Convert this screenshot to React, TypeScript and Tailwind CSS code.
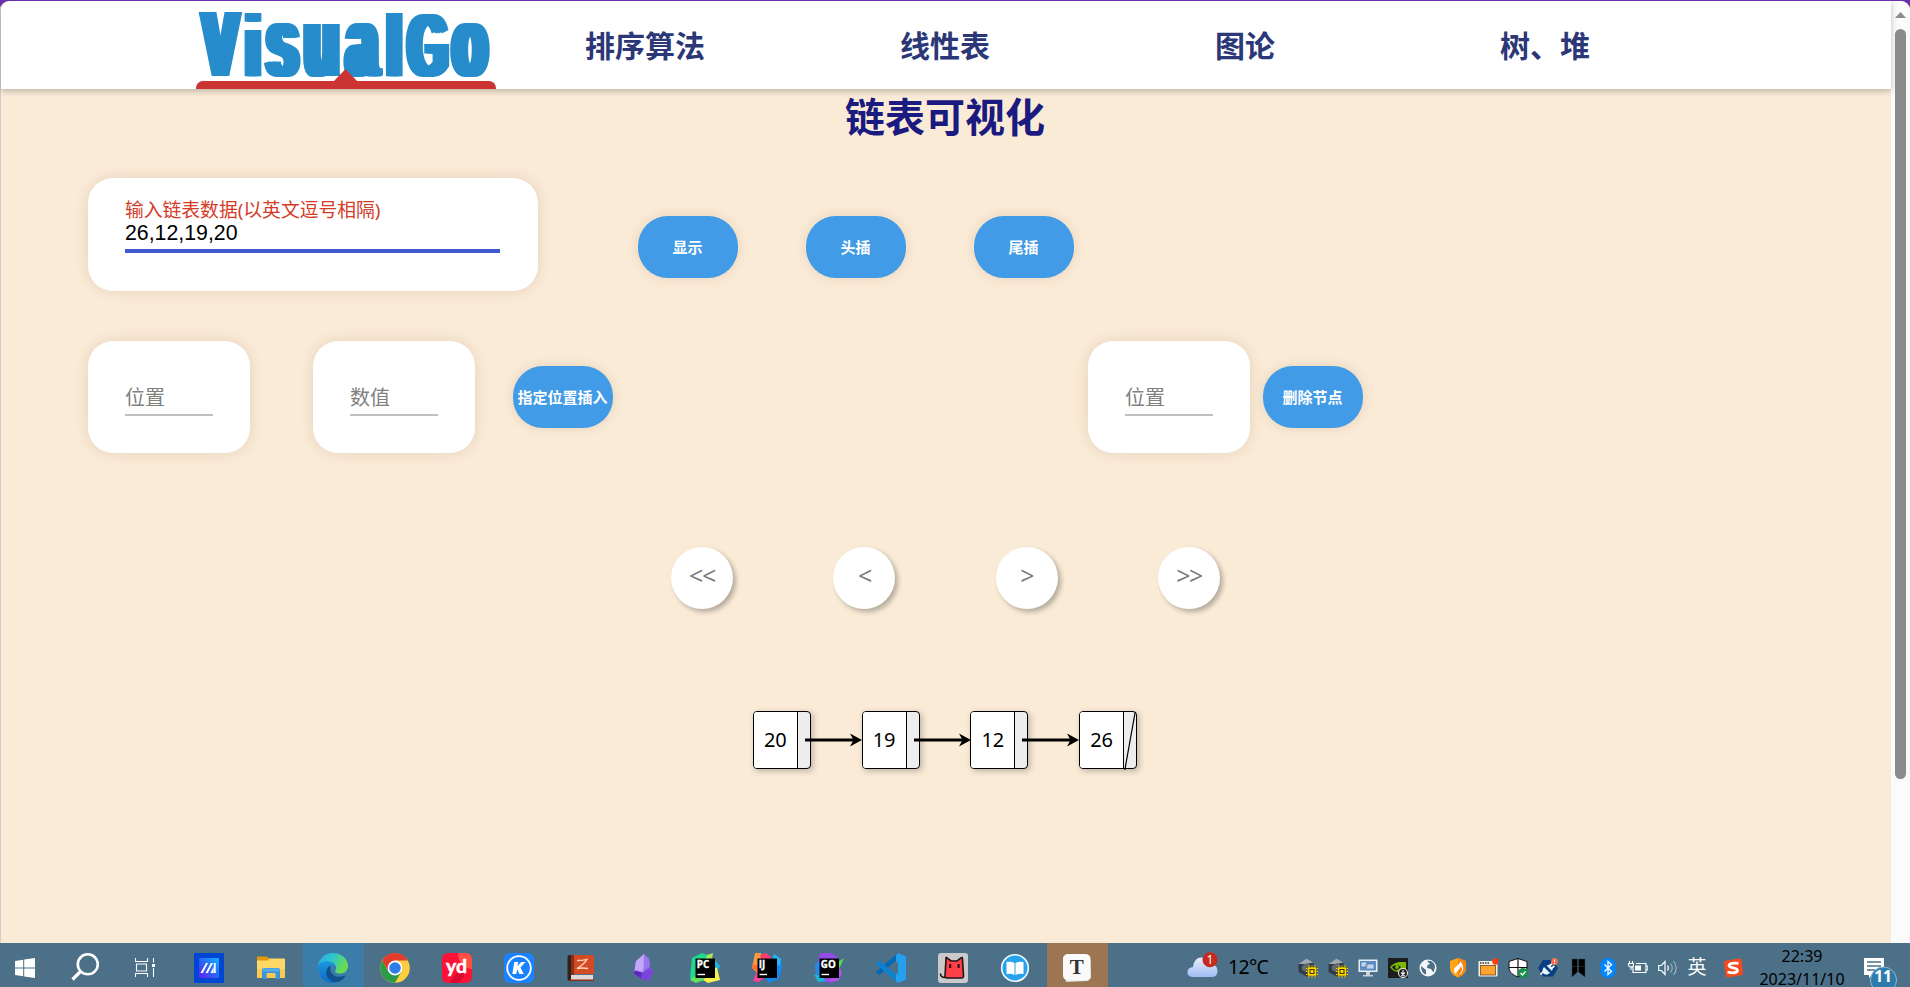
import type { ReactNode } from "react";

const CARD = "bg-white rounded-[25px] shadow-[0_0_14px_rgba(120,80,40,0.16)]";
const CJK = "font-['Noto_Sans','Noto_Sans_CJK_SC',sans-serif]";

function Logo() {
  return (
    <svg width="300" height="88" viewBox="0 0 300 88" className="block overflow-visible">
      <defs>
        <filter id="heavyX" filterUnits="userSpaceOnUse" x="0" y="0" width="300" height="88" colorInterpolationFilters="sRGB">
          <feOffset in="SourceGraphic" dx="-4.800" result="a" />
          <feOffset in="SourceGraphic" dx="-2.400" result="b" />
          <feOffset in="SourceGraphic" dx="2.400" result="c" />
          <feOffset in="SourceGraphic" dx="4.800" result="d" />
          <feMerge>
            <feMergeNode in="a" />
            <feMergeNode in="b" />
            <feMergeNode in="SourceGraphic" />
            <feMergeNode in="c" />
            <feMergeNode in="d" />
          </feMerge>
        </filter>
      </defs>
      <g filter="url(#heavyX)">
        <g transform="scale(0.56 1)" fill="#268ccb">
          <text y="75" fontFamily="Liberation Sans, sans-serif" fontWeight="700" fontSize="87">
            <tspan x="13" fontSize="92">V</tspan>
            <tspan x="89.700" fontSize="87">i</tspan>
            <tspan x="126.700" fontSize="99">s</tspan>
            <tspan x="194.300" fontSize="99">u</tspan>
            <tspan x="269.200" fontSize="99">a</tspan>
            <tspan x="342" fontSize="87">l</tspan>
            <tspan x="379.500" fontSize="89">G</tspan>
            <tspan x="459" fontSize="99">o</tspan>
          </text>
        </g>
      </g>
      <path d="M0 88v-1a7 7 0 0 1 7-7h131l11.500-12L161 80h132a7 7 0 0 1 7 7v1z" fill="#cc3333" />
    </svg>
  );
}

function Header() {
  return (
    <header className="relative z-10 flex h-[88px] shrink-0 rounded-tl-[9px] bg-white pl-[195px] shadow-[0_2px_6px_rgba(0,0,0,0.25)]">
      <Logo />
      <nav className="-ml-px flex">
        {["排序算法", "线性表", "图论", "树、堆"].map((t) => (
          <a key={t} className="flex w-[300px] items-center justify-center pt-px text-[30px] leading-none font-bold text-[#2b3777]">
            {t}
          </a>
        ))}
      </nav>
    </header>
  );
}

function PillButton({ children, className = "" }: { children: ReactNode; className?: string }) {
  return (
    <button className={`h-[62px] w-[100px] shrink-0 rounded-[30px] bg-[#429be6] pr-[1px] text-[15px] font-bold whitespace-nowrap text-white shadow-[0_0_12px_rgba(120,80,40,0.16)] ${className}`}>
      {children}
    </button>
  );
}

function SmallField({ label, className = "" }: { label: string; className?: string }) {
  return (
    <div className={`h-[112px] w-[162px] shrink-0 px-[37px] pt-[38px] ${CARD} ${className}`}>
      <div className="h-[37px] border-b-2 border-[#c0c0c0] text-[20px] leading-[37px] text-[#808080]">{label}</div>
    </div>
  );
}

function StepButton({ label }: { label: string }) {
  return (
    <button className="h-[62px] w-[62px] rounded-full bg-white pb-[6px] font-['Open_Sans',sans-serif] text-[25px] leading-none tracking-[-1.500px] text-[#777] shadow-[3px_3px_5px_rgba(0,0,0,0.28)]">
      {label}
    </button>
  );
}

function Arrow() {
  return (
    <svg width="57" height="14" viewBox="0 0 57 14" className="relative z-10 -mr-[0.250px] -ml-[6px] shrink-0">
      <path d="M0 7h50" stroke="#000" strokeWidth="3" />
      <path d="M57 7L45 .5 48.500 7 45 13.500z" fill="#000" />
    </svg>
  );
}

function ListNode({ value, last }: { value: number; last: boolean }) {
  return (
    <div className="flex h-[58px] w-[58px] shrink-0 rounded-[4px] border border-black bg-[#ededed] shadow-[2px_2px_6px_rgba(0,0,0,0.25)]">
      <div className="flex w-[44px] shrink-0 items-center justify-center rounded-l-[3px] border-r border-black bg-white font-['Noto_Sans',sans-serif] text-[20px] leading-none text-black">
        {value}
      </div>
      {last && (
        <svg width="12" height="58" viewBox="0 0 12 58" className="shrink-0">
          <path d="M.8 58L11.200 0" stroke="#000" strokeWidth="1.200" />
        </svg>
      )}
    </div>
  );
}

function App30({ children }: { children: ReactNode }) {
  return (
    <svg width="30" height="30" viewBox="0 0 30 30">
      {children}
    </svg>
  );
}

function JetBrains({ text, children }: { text: string; children: ReactNode }) {
  return (
    <App30>
      {children}
      <rect x="5.500" y="5.500" width="19.500" height="19.500" fill="#000" />
      <text x="6.800" y="14.800" fontSize="9.800" fontWeight="700" fontFamily="Open Sans, sans-serif" fill="#fff" stroke="#fff" strokeWidth=".3">
        {text}
      </text>
      <path d="M7.500 21.500h7.500" stroke="#fff" strokeWidth="1.400" />
    </App30>
  );
}

const apps: { name: string; bg: string; icon: ReactNode }[] = [
  {
    name: "ma",
    bg: "",
    icon: (
      <App30>
        <defs>
          <linearGradient id="ma" x1="0" y1="1" x2="1" y2="0">
            <stop offset="0" stopColor="#6a1df2" />
            <stop offset=".5" stopColor="#2a66f5" />
            <stop offset="1" stopColor="#12b4ff" />
          </linearGradient>
        </defs>
        <rect width="30" height="30" fill="#0046d2" />
        <rect x="5" y="5" width="20" height="20" fill="url(#ma)" />
        <path d="M6.500 20L12 10h2L8.800 20zM11.500 20L17 10h2l-5.200 10zM16.500 20l3-6v6zM19.800 10h1.900v10h-1.900z" fill="#fff" />
      </App30>
    ),
  },
  {
    name: "explorer",
    bg: "",
    icon: (
      <App30>
        <path d="M1 3.500h10l3 2.500h1v3H1z" fill="#e09a0c" />
        <path d="M1 7.500h11l1.500-2H28a1 1 0 0 1 1 1V25H1z" fill="#ffd766" />
        <path d="M1 16h28v9H1z" fill="#f7cb50" />
        <path d="M6 26v-9a2 2 0 0 1 2-2h14a2 2 0 0 1 2 2v9h-4.500v-6h-9v6z" fill="#3a93dc" />
        <path d="M6.500 15.500h17v3h-17z" fill="#57aee8" />
      </App30>
    ),
  },
  {
    name: "edge",
    bg: "border-l border-transparent bg-clip-padding pr-px bg-[#3b7ca8]",
    icon: (
      <App30>
        <defs>
          <linearGradient id="e1" x1="0" y1="0" x2="1" y2=".4">
            <stop offset="0" stopColor="#28a9e6" />
            <stop offset=".5" stopColor="#2fc6cf" />
            <stop offset="1" stopColor="#68dd4c" />
          </linearGradient>
          <linearGradient id="e2" x1="0" y1="0" x2="0" y2="1">
            <stop offset="0" stopColor="#1d97dd" />
            <stop offset="1" stopColor="#0c6cc6" />
          </linearGradient>
        </defs>
        <path d="M0 13.500C1 5 7.500 0 15 0c9 0 15 6.500 15 13 0 5-4 7.500-8 7.500-3.500 0-5.500-1.500-4.700-2.800C19.500 14 17 9 9.500 9 4.500 9 1 11.500 0 13.500z" fill="url(#e1)" />
        <path d="M0 15C0 11 4 8 9.500 8.300c6 .2 9 4.200 8.500 7.200-.4-2.200-3-3.500-5.500-3C7.500 14 8 24 18 28.500c.8.500-.5 1.500-3 1.500C6.500 30 0 23.500 0 15z" fill="url(#e2)" />
        <path d="M12.500 12.500C9 14 6 20 10 25c4 5 12 6 17-1.500.6-1-.3-1.200-1-.8C19 26 12.500 21.500 12.300 16.500c0-1.800.2-3 .2-4z" fill="#11508f" />
      </App30>
    ),
  },
  {
    name: "chrome",
    bg: "",
    icon: (
      <App30>
        <circle cx="15" cy="15" r="14.800" fill="#ffcd40" />
        <path d="M15 7.500h12.900A14.800 14.800 0 0 0 2.100 7.700L8.600 18.500 15 15z" fill="#e33b2e" />
        <path d="M2.100 7.700A14.800 14.800 0 0 0 15 29.800l6.500-11.200L15 15l-6.500 3.800z" fill="#2a9b48" />
        <circle cx="15" cy="15" r="7.400" fill="#fff" />
        <circle cx="15" cy="15" r="5.800" fill="#2f7de9" />
      </App30>
    ),
  },
  {
    name: "youdao",
    bg: "",
    icon: (
      <App30>
        <rect width="30" height="30" rx="6" fill="#fc1236" />
        <path d="M16 0h8a6 6 0 0 1 6 6v10c-9-1-14-7-14-16z" fill="#ff4f45" />
        <path d="M8 30c3-7 8-11 13-14l1 8-6 6z" fill="#d90b30" />
        <text x="4" y="19.500" fontSize="18" fontWeight="700" fontFamily="Lato, sans-serif" fill="#fff" stroke="#fff" strokeWidth=".5" textLength="21" lengthAdjust="spacingAndGlyphs">
          yd
        </text>
      </App30>
    ),
  },
  {
    name: "kugou",
    bg: "",
    icon: (
      <App30>
        <rect width="30" height="30" rx="6" fill="#1b82ff" />
        <circle cx="15" cy="15" r="11.800" fill="none" stroke="#fff" strokeWidth="1.800" />
        <path d="M10.300 9h3.900l-.8 4.300L17.200 9h4.300l-5 5.500 3.200 6.500h-4.200l-2.300-4.800-.9 4.800H8.300z" fill="#fff" />
      </App30>
    ),
  },
  {
    name: "zotero",
    bg: "",
    icon: (
      <App30>
        <path d="M1.500 4Q1.500 2 4 2H8v26H4q-2.500 0-2.500-2z" fill="#33201b" />
        <path d="M5 2h21.500a1.500 1.500 0 0 1 1.500 1.500V21H5z" fill="#d24b22" />
        <path d="M5 2h3v20H5z" fill="#8d2f18" />
        <path d="M5 22h22v5H5z" fill="#ded9d6" />
        <path d="M3 26.500h25v1.500H3z" fill="#8b2a16" />
        <path d="M11 7.500q5 0 10-1.200-3 5-10 9.200 6-1 11 0" fill="none" stroke="#ffd2bd" strokeWidth="1.300" />
      </App30>
    ),
  },
  {
    name: "obsidian",
    bg: "",
    icon: (
      <App30>
        <path d="M16 1l5 4.500 1 8 3.500 5.500-5 9-8-2.500L5 20.500 8 8.500z" fill="#8458dc" />
        <path d="M16 1L8 8l-1.500 9.500 8.500 1.500 2-8z" fill="#c0a7f8" />
        <path d="M16 1l5 4.500 1 8-6.500 5z" fill="#9a76ec" />
        <path d="M5 20l3-2.500 6 2.500-1 5.500z" fill="#5b2bb8" />
        <path d="M14 20l8-4.500 3.500 3.500-5 9-7.500-2.500z" fill="#7a46da" />
      </App30>
    ),
  },
  {
    name: "pycharm",
    bg: "",
    icon: (
      <JetBrains text="PC">
        <path d="M2 5L12 0l8 3 2 12-9 13-9 1-4-4z" fill="#22d88f" />
        <path d="M17 2l6-2-1 6-8 6z" fill="#a4e85c" />
        <path d="M25 7l5 6-4 7z" fill="#19b9e9" />
        <path d="M13 27l11-13 3 1 3 12-12 3z" fill="#f9f14b" />
        <path d="M0 27l6-5 9 4-9 4z" fill="#68e05f" />
      </JetBrains>
    ),
  },
  {
    name: "idea",
    bg: "",
    icon: (
      <JetBrains text="IJ">
        <path d="M3 0h6l4 8-8 12-5-5z" fill="#fc9a3d" />
        <path d="M8 2l6-2 6 5-9 8z" fill="#fe3c70" />
        <path d="M18 6l5-5 6 5 1 8-3 12-10 4-5-7z" fill="#1688f2" />
        <path d="M22 1l7 5-1 7-8-4z" fill="#2bb5ef" />
        <path d="M1 28l5-12 7 8-6 5z" fill="#fb3f9b" />
        <path d="M0 11l7 2-1 6-5-3z" fill="#ff6a36" />
      </JetBrains>
    ),
  },
  {
    name: "goland",
    bg: "",
    icon: (
      <JetBrains text="GO">
        <path d="M6 0h12l6 5v20l-6 5-12-2-5-9z" fill="#934be8" />
        <path d="M1 11l6-3v16l-5-3z" fill="#268be8" />
        <path d="M0 21l8 2 4 5-8 1z" fill="#18b8d6" />
        <path d="M24 9l6-4-5 11z" fill="#4be34f" />
        <path d="M14 28l12-13 2 6-4 7z" fill="#b650e6" />
      </JetBrains>
    ),
  },
  {
    name: "vscode",
    bg: "",
    icon: (
      <App30>
        <path d="M22 0l-1.500 7L3.500 22 0 19.500v-1z" fill="#0069b5" />
        <path d="M3.500 7.500L0 10v1.200L22 30l-1-8z" fill="#1080cc" />
        <path d="M22 0l8 3.500v23L22 30l-2-2V2z" fill="#24a0ee" />
        <path d="M22 8.200V21.500L13 15z" fill="#4b7087" />
      </App30>
    ),
  },
  {
    name: "cat",
    bg: "",
    icon: (
      <App30>
        <rect width="30" height="30" rx="3" fill="#cbc9c9" />
        <path d="M8 6q-.5-2.500 1-1l4 3h6l4-3q1.500-1.500 1.500 1l1 17q0 2-2 2H9q-2 0-2-2z" fill="#ff4048" stroke="#1f1517" strokeWidth="1.600" />
        <path d="M7 24.500q-4.500 0-4.500-4" fill="none" stroke="#1f1517" strokeWidth="1.600" />
        <path d="M12.200 11v4M20.600 11v4" stroke="#1f1517" strokeWidth="2" />
      </App30>
    ),
  },
  {
    name: "reader",
    bg: "",
    icon: (
      <App30>
        <circle cx="15" cy="15" r="13.300" fill="#27a2ec" stroke="#f3fbff" strokeWidth="1.600" />
        <path d="M6.500 9q5-.8 8 1v12q-3-1.800-8-1zM15.500 10q3-1.800 8-1v12q-5-.8-8 1z" fill="#fff" />
      </App30>
    ),
  },
  {
    name: "typora",
    bg: "border-l border-transparent bg-clip-padding pr-px bg-[#9c7653]",
    icon: (
      <App30>
        <path d="M1 4l5-3 22 2 1 22-3 3-22 1z" fill="#ddd" />
        <rect x="1" y="1" width="27.500" height="26.500" rx="5" fill="#fafafa" />
        <text x="14.700" y="21" textAnchor="middle" fontSize="21" fontWeight="700" fontFamily="Liberation Serif, serif" fill="#333">
          T
        </text>
      </App30>
    ),
  },
];

function Gpu() {
  return (
    <>
      <path d="M.5 6l8-5.500 7 4V13l-7 5.500-8-4.500z" fill="#343a42" />
      <path d="M.5 6l8-5.500 7 4-7 1.500z" fill="#a0a8b0" />
      <path d="M4 8l5-3 3 2v5l-4 2-4-2z" fill="#626b74" />
      <path d="M11 7.500v12M14 7.500v12M17 7.500v12M8 10.500h12M8 13.500h12M8 16.500h12" stroke="#ffd900" strokeWidth="1.200" />
      <path d="M9.500 9h9v9h-9z" fill="#ffd900" stroke="#3a3200" strokeWidth=".5" />
      <path d="M12 11.500h4v4h-4z" fill="#ffd900" stroke="#3a3200" strokeWidth="1.100" />
    </>
  );
}

const tray: { name: string; icon: ReactNode }[] = [
  { name: "gpu1", icon: <Gpu /> },
  { name: "gpu2", icon: <Gpu /> },
  {
    name: "monitor",
    icon: (
      <>
        <rect x=".5" y="1.500" width="19" height="12.500" fill="#e6eef7" />
        <rect x="2" y="3" width="16" height="9.500" fill="#5f8fc4" />
        <path d="M3 4h6v5H3zM8 6h8v5H8z" fill="#bed6ef" stroke="#3f6ba0" strokeWidth=".6" />
        <path d="M8 14h4v3h3v1.500H5V17h3z" fill="#c8d0d8" />
      </>
    ),
  },
  {
    name: "nvidia",
    icon: (
      <>
        <rect width="20" height="20" fill="#1c1c1c" />
        <path d="M2 9q4-4.500 8-4.500V4h8v10h-7Q5 14 2 9z" fill="#76b900" />
        <path d="M4 9q4-4 9 0-3 4-6 3Q5 11 4 9z" fill="#1c1c1c" />
        <circle cx="9" cy="9" r="1.900" fill="#76b900" />
        <circle cx="15" cy="15" r="4.500" fill="#1c1c1c" stroke="#e5e5e5" strokeWidth="1.100" />
        <path d="M15 12v3.500M13 14.500l2 2 2-2M13 17.700h4" stroke="#fff" strokeWidth="1.100" fill="none" />
      </>
    ),
  },
  {
    name: "globe",
    icon: (
      <>
        <circle cx="10" cy="10" r="8.500" fill="#f4f6f8" />
        <path d="M3 8l5 4v4.500Q3 15 3 8zM9 2.800L13 3q4 2.500 4 6l-1.500 5.500L13 11l-4-1 .5-3 2.500-1z" fill="#4b7087" />
      </>
    ),
  },
  {
    name: "huorong",
    icon: (
      <>
        <path d="M10 0l8 3v7c0 5-4 8-8 9.500C6 18 2 15 2 10V3z" fill="#ffa414" />
        <path d="M10 0l8 3v7c0 5-4 8-8 9.500z" fill="#f78312" />
        <path d="M12 3c1 4-6 5-6 9 0 2 1 3 2 4 0-3 4-4 5-8 2 4 1 6-3 9.500 6-2 7-9 2-14.500z" fill="#fff" />
      </>
    ),
  },
  {
    name: "window",
    icon: (
      <>
        <rect x=".5" y="3" width="19" height="15.500" rx="1" fill="#f4f0e8" />
        <rect x="2.500" y="7.500" width="15" height="9.500" fill="#ffa42a" stroke="#6d4a28" strokeWidth=".8" />
        <path d="M2 5h9" stroke="#333" strokeWidth="1.400" strokeDasharray="1.500 1" />
        <circle cx="17.500" cy="3.500" r="3.200" fill="#ff3d0a" />
      </>
    ),
  },
  {
    name: "shield",
    icon: (
      <>
        <path d="M10 .5l9 3v6c0 5-4 7.500-9 9.500-5-2-9-4.500-9-9.500v-6z" fill="#fff" stroke="#111" />
        <path d="M10 0v19M1 9.500h18" stroke="#111" strokeWidth="1.200" />
        <circle cx="15" cy="15" r="5" fill="#15914a" />
        <path d="M12.500 15l2 2 3.200-3.600" stroke="#fff" strokeWidth="1.400" fill="none" />
      </>
    ),
  },
  {
    name: "plug",
    icon: (
      <>
        <path d="M5 2h10l5 8-5 8.500H5L0 10z" fill="#073e80" />
        <path d="M2.500 16.500l4-4M11 8l3.500-2.500M13 10.500l3.500-2.500" stroke="#fff" strokeWidth="1.600" />
        <path d="M6 9l6 6q-4 3-6.500.5T6 9zM8.500 7.500l5.500 5.500 1-3-4-3z" fill="#e9f3ff" />
        <circle cx="16.500" cy="3.500" r="3.500" fill="#f36b4c" />
        <path d="M16.500 1.500v2.500M16.500 5v1" stroke="#fff" strokeWidth="1" />
      </>
    ),
  },
  { name: "mark", icon: <path d="M4 1h5.500v13L4 19zM10.500 1H17v18l-6.500-5zM4 8.500h13" fill="#000" stroke="#36454f" strokeWidth=".5" /> },
  {
    name: "bluetooth",
    icon: (
      <>
        <rect x="2.500" y="0" width="15" height="20" rx="7" fill="#0086ff" />
        <path d="M6.500 6.500l7 7L10 16.500v-13l3.500 3-7 7" stroke="#fff" strokeWidth="1.300" fill="none" />
      </>
    ),
  },
  {
    name: "battery",
    icon: (
      <>
        <path d="M8 5.500h10v9H5V9M18.500 8h1.500v4h-1.500" stroke="#fff" strokeWidth="1.200" fill="none" />
        <path d="M7 7.500h6v5H7z" fill="#fff" />
        <path d="M1.500 3v2.500M4.500 3v2.500M.5 5.500h5v1.500q0 2-2.500 2T.5 7zM3 9v3" stroke="#fff" strokeWidth="1.100" fill="none" />
      </>
    ),
  },
  {
    name: "volume",
    icon: (
      <>
        <path d="M.7 7.500h2.600l3.700-4v13l-3.700-4H.7zM9.500 7.500q1.700 2.500 0 5" stroke="#fff" strokeWidth="1.200" fill="none" />
        <path d="M12.500 5.500q3.500 4.500 0 9M15.500 3q5.500 7 0 14" stroke="#9db2bf" strokeWidth="1.200" fill="none" />
      </>
    ),
  },
];

function Taskbar() {
  return (
    <footer className="flex h-[44px] shrink-0 bg-[#4b7087]">
      <div className="flex w-[50px] items-center justify-center pt-[5px]">
        <svg width="20" height="20" viewBox="0 0 20 20" fill="#fff">
          <path d="M0 3l8.200-1.200v7.700H0zM9.200 1.600L20 0v9.500H9.200zM0 10.500h8.200v7.700L0 17zM9.200 10.500H20V20L9.200 18.400z" />
        </svg>
      </div>
      <div className="flex w-[70px] items-center justify-center pt-[4px]">
        <svg width="28" height="28" viewBox="0 0 28 28" fill="none" stroke="#fff">
          <circle cx="16.800" cy="11.300" r="10" strokeWidth="2.600" />
          <path d="M9.500 18.500L1.500 26.500" strokeWidth="3.200" />
        </svg>
      </div>
      <div className="mr-[8px] flex w-[50px] items-center justify-center pt-[5px]">
        <svg width="20" height="20" viewBox="0 0 20 20" fill="none" stroke="#fff">
          <path d="M.5 0v3.500h12V0M.5 19v-3.500h12V19M1.500 6h10v7h-10zM18.500 0v4.500M18.500 10v9" strokeWidth="1.100" />
          <path d="M17 6h3v3h-3z" fill="#fff" stroke="none" />
        </svg>
      </div>
      {apps.map((a) => (
        <div key={a.name} className={`flex w-[62px] items-center justify-center pt-[6px] ${a.bg}`}>
          {a.icon}
        </div>
      ))}
      <div className="ml-[79px] flex w-[106px] items-center">
        <svg width="32" height="26" viewBox="0 0 32 26">
          <defs>
            <linearGradient id="cl" x1="0" y1="0" x2="0" y2="1">
              <stop offset="0" stopColor="#e9effc" />
              <stop offset="1" stopColor="#9fbdf2" />
            </linearGradient>
          </defs>
          <path d="M5.500 25Q0 24.500.5 19.500q.5-4 5.500-4.500Q7 5.500 14.500 5.500q6 0 8 7 8-1 8 6.500 0 5.500-5 6z" fill="url(#cl)" />
          <circle cx="23" cy="7.700" r="7.500" fill="#c42b1c" />
          <text x="23" y="11.900" textAnchor="middle" fontSize="12" fontFamily="Noto Sans, sans-serif" fill="#fff">
            1
          </text>
        </svg>
        <span className="ml-[9px] pt-[4px] font-['Noto_Sans',sans-serif] text-[19.500px] leading-none tracking-[-0.700px] text-black">12°C</span>
      </div>
      {tray.map((t) => (
        <div key={t.name} className="flex w-[30px] shrink-0 items-center justify-center pt-[6px]">
          <svg width="20" height="20" viewBox="0 0 20 20">
            {t.icon}
          </svg>
        </div>
      ))}
      <div className="flex w-[30px] shrink-0 items-center justify-center pt-[5px] pr-[2px] text-[19px] leading-none text-white">英</div>
      <div className="flex w-[40px] shrink-0 items-center justify-center pt-[6px]">
        <svg width="20" height="20" viewBox="0 0 20 20">
          <path d="M3 2.500L17 .5q1.500 0 1.700 1.500L20 15q0 2-1.500 2.300L5 19.500q-2 0-2.300-2L.8 5Q.8 3 3 2.500z" fill="#f2491f" />
          <path d="M15.500 5.300Q7 4.200 6 7.300c-.6 3 8.800 2 8.500 5-.4 3-5.500 3-10 1.700" stroke="#fff" strokeWidth="2.800" fill="none" />
        </svg>
      </div>
      <div className="flex w-[98px] shrink-0 flex-col items-center pt-[2px] font-['Noto_Sans',sans-serif] text-[16px] leading-[23px] text-black">
        <span>22:39</span>
        <span>2023/11/10</span>
      </div>
      <div className="ml-[12px] pt-[14px]">
        <svg width="36" height="30" viewBox="0 0 36 30">
          <path d="M1 1h20v17H9l-3 3v-3H1z" fill="#fff" />
          <path d="M4 5h14M4 9h14M4 13h8" stroke="#4b7087" strokeWidth="1.400" />
          <circle cx="20.500" cy="23" r="13" fill="#2f7bab" stroke="#8db8d2" />
          <text x="20" y="25" textAnchor="middle" fontSize="15.500" fontWeight="700" fontFamily="Noto Sans, sans-serif" fill="#fff">
            11
          </text>
        </svg>
      </div>
    </footer>
  );
}

export default function App() {
  const nodes = [20, 19, 12, 26];
  return (
    <div className={`flex h-[987px] w-[1910px] flex-col overflow-hidden bg-[#6b30ab] pt-px ${CJK}`}>
      <div className="flex h-[942px] shrink-0 overflow-hidden rounded-t-[9px] bg-[#faebd7]">
        <main className="flex w-[1891px] shrink-0 flex-col border-l border-[#dcc8cf]">
          <Header />
          <h1 className="h-[56px] pr-[2px] text-center text-[40px] leading-[56px] font-bold text-[#1b1a80]">链表可视化</h1>
          <section className="mt-[33px] flex pl-[87px]">
            <div className={`h-[113px] w-[450px] px-[37px] pt-[20px] ${CARD}`}>
              <div className="h-[24px] text-[18.800px] leading-[25px] text-[#d43c28]">输入链表数据(以英文逗号相隔)</div>
              <div className="h-[31px] w-[375px] border-b-4 border-[#4057cf] font-['Liberation_Sans',sans-serif] text-[21.300px] leading-[22px] text-black">
                26,12,19,20
              </div>
            </div>
            <div className="ml-[100px] flex gap-[68px] pt-[38px]">
              <PillButton>显示</PillButton>
              <PillButton>头插</PillButton>
              <PillButton>尾插</PillButton>
            </div>
          </section>
          <section className="mt-[50px] flex pl-[87px]">
            <SmallField label="位置" />
            <SmallField label="数值" className="ml-[63px]" />
            <PillButton className="mt-[25px] ml-[38px]">指定位置插入</PillButton>
            <SmallField label="位置" className="ml-[475px]" />
            <PillButton className="mt-[25px] ml-[13px]">删除节点</PillButton>
          </section>
          <section className="mt-[94px] flex justify-center gap-[100.400px] pr-[1px]">
            {["<<", "<", ">", ">>"].map((s) => (
              <StepButton key={s} label={s} />
            ))}
          </section>
          <section className="mt-[102px] flex items-center justify-center pr-[2px]">
            {nodes.map((n, i) => (
              <div key={n} className="flex items-center">
                <ListNode value={n} last={i === nodes.length - 1} />
                {i < nodes.length - 1 && <Arrow />}
              </div>
            ))}
          </section>
        </main>
        <aside className="flex w-[19px] flex-col items-center bg-[#fbfbfb] pt-[11px]">
          <svg width="11" height="6" viewBox="0 0 11 6" className="shrink-0">
            <path d="M0 6L5.500 0 11 6z" fill="#8b8b8b" />
          </svg>
          <div className="mt-[11px] h-[750px] w-[11px] rounded-full bg-[#8b8b8b]" />
        </aside>
      </div>
      <Taskbar />
    </div>
  );
}
